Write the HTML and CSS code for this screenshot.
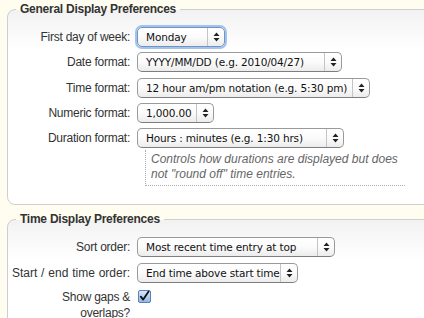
FILE: index.html
```html
<!DOCTYPE html>
<html>
<head>
<meta charset="utf-8">
<link rel="stylesheet" href="styles.css">
</head>
<body>
<div class="page">
  <fieldset class="group">
    <legend class="group-title">General Display Preferences</legend>
    <div class="rows">
      <label class="lbl">First day of week:</label>
      <div class="sel sel-focus w-week"><span class="sel-text">Monday</span><span class="sel-arrows"><svg width="7" height="10" viewBox="0 0 7 10"><path d="M3.5 0.5 L6.5 4 H0.5 Z M3.5 9.5 L6.5 6 H0.5 Z" fill="#222"/></svg></span></div>

      <label class="lbl">Date format:</label>
      <div class="sel w-date"><span class="sel-text">YYYY/MM/DD (e.g. 2010/04/27)</span><span class="sel-arrows"><svg width="7" height="10" viewBox="0 0 7 10"><path d="M3.5 0.5 L6.5 4 H0.5 Z M3.5 9.5 L6.5 6 H0.5 Z" fill="#222"/></svg></span></div>

      <label class="lbl">Time format:</label>
      <div class="sel w-time"><span class="sel-text">12 hour am/pm notation (e.g. 5:30 pm)</span><span class="sel-arrows"><svg width="7" height="10" viewBox="0 0 7 10"><path d="M3.5 0.5 L6.5 4 H0.5 Z M3.5 9.5 L6.5 6 H0.5 Z" fill="#222"/></svg></span></div>

      <label class="lbl">Numeric format:</label>
      <div class="sel w-num"><span class="sel-text">1,000.00</span><span class="sel-arrows"><svg width="7" height="10" viewBox="0 0 7 10"><path d="M3.5 0.5 L6.5 4 H0.5 Z M3.5 9.5 L6.5 6 H0.5 Z" fill="#222"/></svg></span></div>

      <label class="lbl">Duration format:</label>
      <div class="sel w-dur"><span class="sel-text">Hours : minutes (e.g. 1:30 hrs)</span><span class="sel-arrows"><svg width="7" height="10" viewBox="0 0 7 10"><path d="M3.5 0.5 L6.5 4 H0.5 Z M3.5 9.5 L6.5 6 H0.5 Z" fill="#222"/></svg></span></div>

      <p class="note">Controls how durations are displayed but does not "round off" time entries.</p>
    </div>
  </fieldset>

  <fieldset class="group group-second">
    <legend class="group-title">Time Display Preferences</legend>
    <div class="rows rows-second">
      <label class="lbl">Sort order:</label>
      <div class="sel w-sort"><span class="sel-text">Most recent time entry at top</span><span class="sel-arrows"><svg width="7" height="10" viewBox="0 0 7 10"><path d="M3.5 0.5 L6.5 4 H0.5 Z M3.5 9.5 L6.5 6 H0.5 Z" fill="#222"/></svg></span></div>

      <label class="lbl lbl-spaced">Start / end time order:</label>
      <div class="sel w-order"><span class="sel-text">End time above start time</span><span class="sel-arrows"><svg width="7" height="10" viewBox="0 0 7 10"><path d="M3.5 0.5 L6.5 4 H0.5 Z M3.5 9.5 L6.5 6 H0.5 Z" fill="#222"/></svg></span></div>

      <label class="lbl lbl-multi">Show gaps &amp;<br>overlaps?</label>
      <span class="check"><svg width="13" height="13" viewBox="0 0 13 13"><defs><linearGradient id="cb" x1="0" y1="0" x2="0" y2="1"><stop offset="0" stop-color="#d9e8fa"/><stop offset="1" stop-color="#8fb6e6"/></linearGradient></defs><rect x="0.5" y="0.5" width="12" height="12" rx="1.5" fill="url(#cb)" stroke="#5a7fb3"/><path d="M2.8 6.6 L5.2 9.6 L10.6 1.6" fill="none" stroke="#111" stroke-width="1.8" stroke-linecap="round" stroke-linejoin="round"/></svg></span>
    </div>
  </fieldset>
</div>
</body>
</html>
```

FILE: styles.css
```css
html, body {
  margin: 0;
  padding: 0;
  overflow: hidden;
  background: #fffdf0;
}

.page {
  padding-left: 7px;
  width: 460px;
  font-family: "Liberation Sans", Arial, sans-serif;
  color: #333;
}

.group {
  margin: 0;
  padding: 0 0 18px 0;
  border: 1px solid #cfcfcf;
  border-radius: 8px;
  background: linear-gradient(#f2f2f2, #ffffff 40px);
  min-width: 0;
}

.group-second {
  margin-top: 5px;
}

.group-title {
  margin-left: 8px;
  padding: 0 4px;
  font-weight: bold;
  font-size: 12px;
  letter-spacing: -0.25px;
  line-height: 18px;
  color: #333;
}

.rows {
  display: grid;
  grid-template-columns: 122px max-content;
  column-gap: 7px;
  row-gap: 5.3px;
  align-items: center;
  padding-top: 9px;
}

.rows-second {
  padding-top: 9px;
}

.lbl {
  text-align: right;
  font-size: 12px;
  letter-spacing: -0.25px;
  line-height: 16px;
  color: #333;
}

.lbl-spaced {
  letter-spacing: 0;
  word-spacing: 0.5px;
}

.lbl-multi {
  margin-top: 1px;
}

.sel {
  box-sizing: border-box;
  height: 20px;
  display: flex;
  align-items: stretch;
  border: 1px solid #9a9a9a;
  border-bottom-color: #7e7e7e;
  border-radius: 5px;
  background: linear-gradient(#ffffff, #fbfbfb 50%, #ececec);
  font-family: "DejaVu Sans", sans-serif;
  font-size: 10.5px;
  letter-spacing: -0.15px;
  color: #111;
}

.sel-focus {
  border-color: #6f93c4;
  box-shadow: 0 0 0 2px #a4c3ea;
}

.sel-text {
  flex: 1;
  padding-left: 8px;
  line-height: 18px;
  white-space: nowrap;
  overflow: hidden;
}

.sel-arrows {
  width: 16px;
  border-left: 1px solid #c4c4c4;
  display: flex;
  align-items: center;
  justify-content: center;
}

.w-week { width: 88px; }
.w-date { width: 205px; }
.w-time { width: 233px; }
.w-num { width: 77px; }
.w-dur { width: 207px; }
.w-sort { width: 198px; }
.w-order { width: 161px; }

.note {
  grid-column: 2;
  margin: -3px 0 0 8px;
  width: 254px;
  padding: 2px 0 3px 5px;
  border-left: 1px dotted #aaa;
  border-bottom: 1px dotted #aaa;
  font-style: italic;
  font-size: 12px;
  line-height: 15px;
  color: #666;
}

.check {
  align-self: start;
  margin-top: 2px;
  margin-left: 1px;
  display: flex;
}
```
